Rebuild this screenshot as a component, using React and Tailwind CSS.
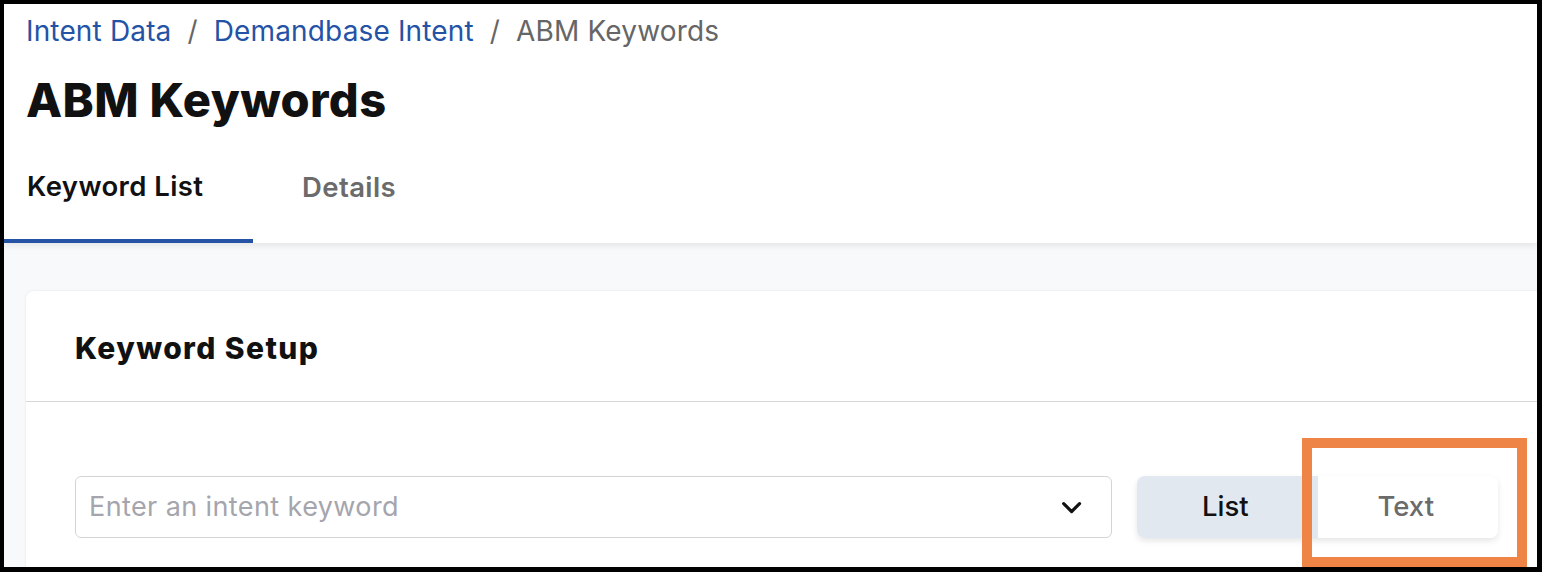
import React, { useState } from 'react';

const Chevron = () => (
  <svg width="28" height="28" viewBox="0 0 24 24" fill="none" stroke="#111" strokeWidth="2.8" strokeLinecap="round" strokeLinejoin="round">
    <path d="M5 9l7 7 7-7" />
  </svg>
);

const App = () => {
  const [mode, setMode] = useState('text');
  const [tab, setTab] = useState('list');

  return (
    <div className="relative h-[572px] w-[1542px] overflow-hidden border-t-4 border-l-4 border-r-[5px] border-b-[5px] border-black bg-white font-['Inter',sans-serif]">
      {/* header */}
      <div className="relative z-10 bg-white shadow-[0_3px_6px_rgba(0,0,0,0.08)]">
        <div className="pl-[22px] pt-[10px]">
          <nav className="flex items-center text-[28px] leading-[34px] tracking-[0.15px] text-[#666]">
            <a href="#" className="text-[#2453a6]">Intent Data</a>
            <span className="mx-[16px]">/</span>
            <a href="#" className="text-[#2453a6]">Demandbase Intent</a>
            <span className="mx-[16px]">/</span>
            <span>ABM Keywords</span>
          </nav>
          <h1 className="mt-[24px] text-[47px] font-extrabold leading-[56px] tracking-[0.4px] text-[#111]">
            ABM Keywords
          </h1>
        </div>
        <div className="mt-[40px] flex">
          <button
            onClick={() => setTab('list')}
            className={`w-[249px] border-b-4 pb-[35px] pl-[23px] text-left text-[27.5px] font-semibold leading-[34px] tracking-[0.4px] ${tab === 'list' ? 'border-[#2453a6] text-[#111]' : 'border-transparent text-[#6b6b6b]'}`}
          >
            Keyword List
          </button>
          <button
            onClick={() => setTab('details')}
            className={`border-b-4 pb-[35px] pl-[49px] pr-[24px] pt-[2px] text-left text-[27.5px] font-semibold leading-[34px] tracking-[0.4px] ${tab === 'details' ? 'border-[#2453a6] text-[#111]' : 'border-transparent text-[#6b6b6b]'}`}
          >
            Details
          </button>
        </div>
      </div>

      {/* body */}
      <div className="h-full bg-[#f8f9fb] pl-[22px] pt-[48px]">
        <div className="mr-[-40px] h-full rounded-tl-lg bg-white shadow-[0_0_3px_rgba(0,0,0,0.08)]">
          <div className="border-b border-[#d6d6d6] pb-[35px] pl-[49px] pt-[39px]">
            <h2 className="text-[30px] font-extrabold leading-[36px] tracking-[1.4px] text-[#111]">Keyword Setup</h2>
          </div>
          <div className="flex items-center pl-[49px] pt-[74px]">
            <div className="flex h-[62px] w-[1037px] items-center justify-between rounded-md border border-[#d4d4d4] pl-[13px] pr-[26px]">
              <input
                type="text"
                placeholder="Enter an intent keyword"
                className="w-full bg-transparent text-[27px] tracking-[0.4px] text-[#111] outline-none placeholder:text-[#a5a5ad]"
              />
              <Chevron />
            </div>
            <div className="ml-[25px] flex h-[62px] w-[361px] rounded-lg shadow-[0_3px_6px_rgba(0,0,0,0.1)]">
              <button
                onClick={() => setMode('list')}
                className={`flex-1 rounded-l-lg pr-[4px] text-[27.5px] font-medium ${mode === 'list' ? 'bg-white text-[#6b6b6b]' : 'bg-[#e2e8f0] text-[#111]'}`}
              >
                List
              </button>
              <button
                onClick={() => setMode('text')}
                className={`flex-1 rounded-r-lg pr-[4px] text-[27.5px] font-medium ${mode === 'text' ? 'bg-white text-[#6b6b6b]' : 'bg-[#e2e8f0] text-[#111]'}`}
              >
                Text
              </button>
            </div>
          </div>
        </div>
      </div>

      {/* annotation highlight */}
      <div className="pointer-events-none absolute left-[1298px] top-[434px] h-[129px] w-[225px] border-[10px] border-[#ee8446]" />
    </div>
  );
};

export default App;
